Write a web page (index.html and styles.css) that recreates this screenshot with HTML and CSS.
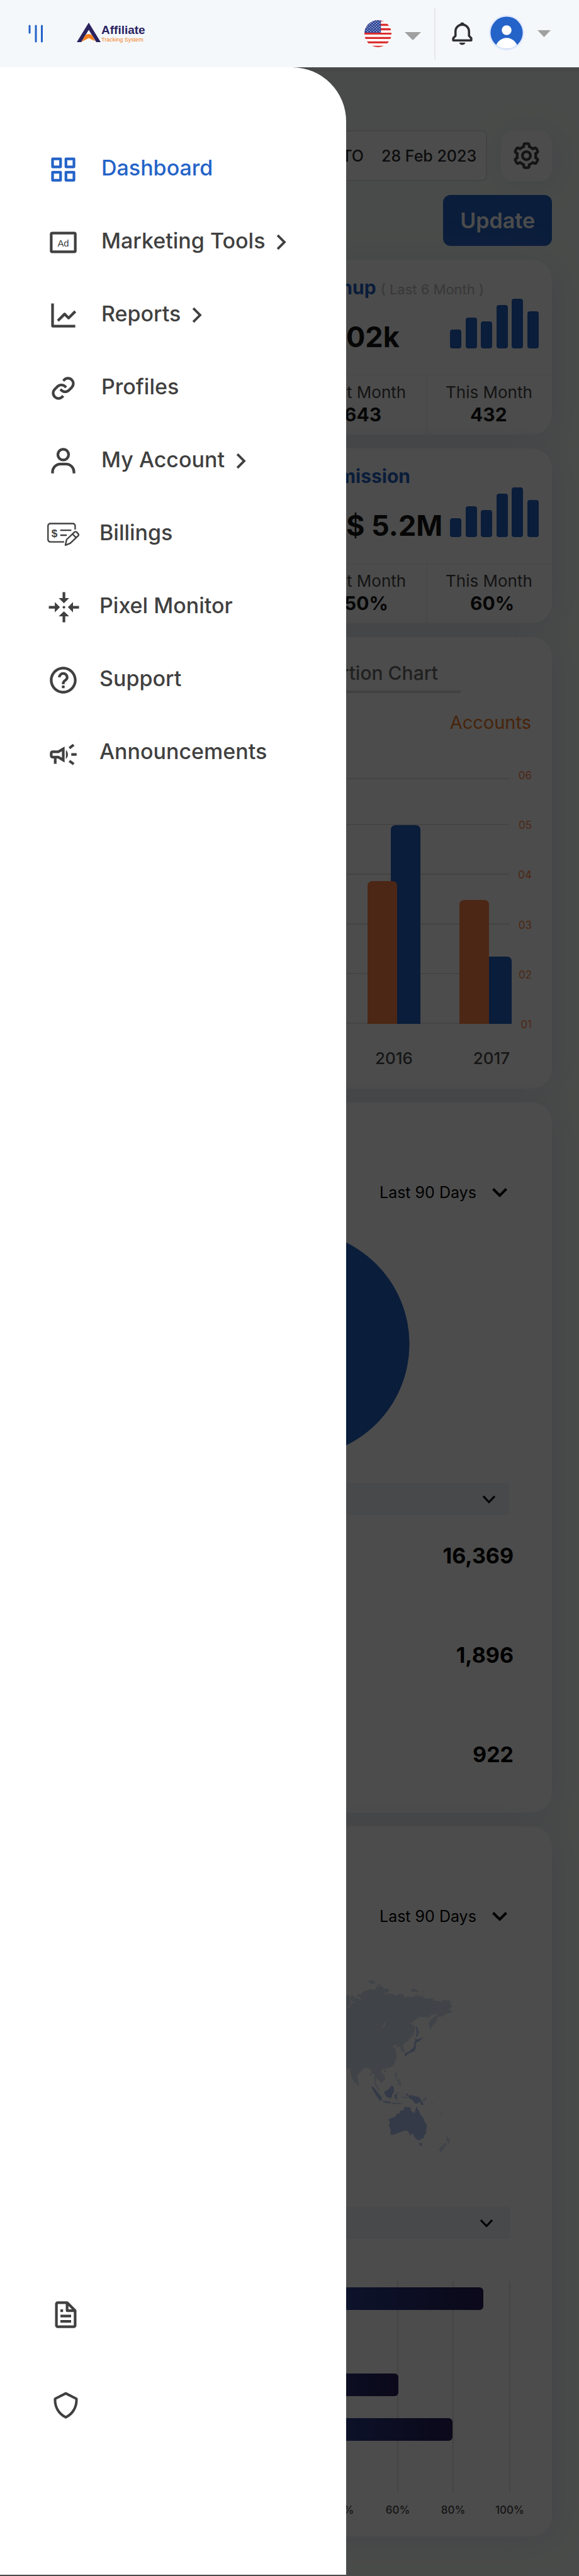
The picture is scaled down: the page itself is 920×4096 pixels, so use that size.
FILE: index.html
```html
<!DOCTYPE html>
<html lang="en">
<head>
<meta charset="utf-8">
<meta name="viewport" content="width=device-width, initial-scale=1">
<title>Affiliate Tracking System</title>
<link rel="stylesheet" href="styles.css">
</head>
<body>
<div class="page">
  <header class="topbar">
    <button class="icon-button menu-button" type="button" aria-label="Close menu">
      <svg width="24" height="29" viewBox="0 0 24 29" fill="none" stroke="#2463c8" stroke-width="3" stroke-linecap="round"><path d="M2 2v11M12 2v25M21.500 2v25"/></svg>
    </button>
    <a class="logo" href="#" aria-label="Affiliate Tracking System">
      <svg width="116" height="38" viewBox="0 0 116 38">
        <path fill="#2a235f" d="M19 1 38 32H31L19 12.500 7 32H0z"/>
        <path fill="#f57f20" d="M7.500 31.500 13.500 21q5.500-4 11 0l4.500 9.500-10-5z"/>
        <text class="logo-name" x="39" y="19">Affiliate</text>
        <text class="logo-tag" x="39" y="31">Tracking System</text>
      </svg>
    </a>
    <div class="topbar-tools">
      <button class="icon-button" type="button" aria-label="Language: English (US)">
        <svg width="43" height="43" viewBox="0 0 24 24">
          <defs><clipPath id="disc"><circle cx="12" cy="12" r="12"/></clipPath></defs>
          <g clip-path="url(#disc)">
            <path fill="#fff" d="M0 0h24v24H0z"/>
            <path fill="#dc2f2f" d="M0 0h24v1.200H0zM0 3.200h24v1.900H0zM0 7.100h24V9H0zM0 11.100h24v1.800H0zM0 14.900h24v1.900H0zM0 18.900h24v1.800H0zM0 22.800h24V24H0z"/>
            <path fill="#2f4698" d="M0 0h14.600v11.100H0z"/>
            <g stroke="#fff" stroke-width=".8" stroke-linecap="round" stroke-dasharray="0 2.600"><path d="M3 .600h12M1.700 1.800h12M3 3h12M1.700 4.200h12M3 5.400h12M1.700 6.600h12M3 7.800h12M1.700 9h12M3 10.200h12"/></g>
          </g>
        </svg>
        <svg width="26" height="21" viewBox="0 0 26 21"><path fill="#a0a0a0" d="M0 8h26L13 21z"/></svg>
      </button>
      <span class="topbar-divider"></span>
      <button class="icon-button" type="button" aria-label="Notifications">
        <svg width="43" height="43" viewBox="0 0 24 24" fill="#2f3033"><path d="M19 13.586V10c0-3.217-2.185-5.927-5.145-6.742C13.562 2.520 12.846 2 12 2s-1.562.520-1.855 1.258C7.185 4.074 5 6.783 5 10v3.586l-1.707 1.707A.996.996 0 0 0 3 16v2a1 1 0 0 0 1 1h16a1 1 0 0 0 1-1v-2a.996.996 0 0 0-.293-.707L19 13.586zM19 17H5v-.586l1.707-1.707A.996.996 0 0 0 7 14v-4c0-2.757 2.243-5 5-5s5 2.243 5 5v4c0 .266.105.520.293.707L19 16.414V17zm-7 5a2.980 2.980 0 0 0 2.818-2H9.182A2.980 2.980 0 0 0 12 22z"/></svg>
      </button>
      <button class="icon-button" type="button" aria-label="Profile">
        <svg width="56" height="60" viewBox="0 0 56 60">
          <defs><clipPath id="face"><circle cx="28" cy="28" r="25.600"/></clipPath></defs>
          <circle cx="28" cy="28" r="28" fill="#e1e9ff"/>
          <circle cx="28" cy="28" r="25.600" fill="#2463c8"/>
          <circle cx="28" cy="24" r="7.800" fill="#fff"/>
          <ellipse cx="28" cy="55" rx="18" ry="18.700" fill="#fff" clip-path="url(#face)"/>
        </svg>
        <svg width="21" height="11" viewBox="0 0 21 11"><path fill="#a0a0a0" d="M0 0h21L10.500 11z"/></svg>
      </button>
    </div>
  </header>

  <div class="stage">
    <main class="dashboard">
      <div class="toolbar">
        <div class="date-range">
          <input class="date-input" type="text" value="01 Jan 2023" aria-label="From date">
          <span>TO</span>
          <input class="date-input" type="text" value="28 Feb 2023" aria-label="To date">
        </div>
        <button class="settings-button" type="button" aria-label="Settings">
          <svg width="51" height="51" viewBox="0 0 24 24" fill="#444"><path d="M12 16c2.206 0 4-1.794 4-4s-1.794-4-4-4-4 1.794-4 4 1.794 4 4 4zm0-6c1.084 0 2 .916 2 2s-.916 2-2 2-2-.916-2-2 .916-2 2-2z"/><path d="m2.845 16.136 1 1.730c.531.917 1.809 1.261 2.730.730l.529-.306A8.100 8.100 0 0 0 9 19.402V20c0 1.103.897 2 2 2h2c1.103 0 2-.897 2-2v-.598a8.132 8.132 0 0 0 1.896-1.111l.529.306c.923.530 2.198.188 2.731-.731l.999-1.729a2.001 2.001 0 0 0-.731-2.732l-.505-.292a7.718 7.718 0 0 0 0-2.224l.505-.292a2.002 2.002 0 0 0 .731-2.732l-.999-1.729c-.531-.920-1.808-1.265-2.731-.732l-.529.306A8.100 8.100 0 0 0 15 4.598V4c0-1.103-.897-2-2-2h-2c-1.103 0-2 .897-2 2v.598a8.132 8.132 0 0 0-1.896 1.111l-.529-.306c-.924-.531-2.200-.187-2.731.732l-.999 1.729a2.001 2.001 0 0 0 .731 2.732l.505.292a7.683 7.683 0 0 0 0 2.223l-.505.292a2.003 2.003 0 0 0-.731 2.733zm3.326-2.758A5.703 5.703 0 0 1 6 12c0-.462.058-.926.170-1.378a.999.999 0 0 0-.470-1.108l-1.123-.650.998-1.729 1.145.662a.997.997 0 0 0 1.188-.142 6.071 6.071 0 0 1 2.384-1.399A1 1 0 0 0 11 5.300V4h2v1.300a1 1 0 0 0 .708.956 6.083 6.083 0 0 1 2.384 1.399.999.999 0 0 0 1.188.142l1.144-.661 1 1.729-1.124.649a1 1 0 0 0-.470 1.108c.112.452.170.916.170 1.378 0 .461-.058.925-.171 1.378a1 1 0 0 0 .471 1.108l1.123.649-.998 1.729-1.145-.661a.996.996 0 0 0-1.188.142 6.071 6.071 0 0 1-2.384 1.399A1 1 0 0 0 13 18.700l.002 1.300H11v-1.300a1 1 0 0 0-.708-.956 6.083 6.083 0 0 1-2.384-1.399.992.992 0 0 0-1.188-.141l-1.144.662-1-1.729 1.124-.651a1 1 0 0 0 .471-1.108z"/></svg>
        </button>
      </div>
      <button class="update-button" type="button">Update</button>

      <section class="card stat">
        <h2 class="stat-title stat-title-note">Affiliate Signup <small>( Last 6 Month )</small></h2>
        <div class="stat-body">
          <strong class="stat-value">02k</strong>
          <div class="mini-bars"><i style="height:38%"></i><i style="height:62%"></i><i style="height:54%"></i><i style="height:87%"></i><i style="height:100%"></i><i style="height:75%"></i></div>
        </div>
        <dl class="stat-foot">
          <div><dt>Last Month</dt><dd>643</dd></div>
          <div><dt>This Month</dt><dd>432</dd></div>
        </dl>
      </section>

      <section class="card stat">
        <h2 class="stat-title">Total Commission</h2>
        <div class="stat-body">
          <strong class="stat-value">$ 5.2M</strong>
          <div class="mini-bars"><i style="height:38%"></i><i style="height:62%"></i><i style="height:54%"></i><i style="height:87%"></i><i style="height:100%"></i><i style="height:75%"></i></div>
        </div>
        <dl class="stat-foot">
          <div><dt>Last Month</dt><dd>50%</dd></div>
          <div><dt>This Month</dt><dd>60%</dd></div>
        </dl>
      </section>

      <section class="card chart-card">
        <h2 class="chart-tab">Proportion Chart</h2>
        <p class="chart-legend">Accounts</p>
        <svg class="chart" viewBox="0 0 834 500">
          <path stroke="#e3e3e3" stroke-width="2" d="M60 28h706M60 101h706M60 180h706M60 259h706M60 338h706M60 417h706"/>
          <path fill="#2261c4" d="M578 418V110q0-8 8-8h31q8 0 8 8v308zM723 418V319q0-8 8-8h31q8 0 8 8v99z"/>
          <path fill="#ff8249" d="M541 418V199q0-8 8-8h31q8 0 8 8v219zM687 418V229q0-8 8-8h31q8 0 8 8v189z"/>
          <g class="axis-value" text-anchor="end">
            <text x="802" y="29">06</text><text x="802" y="108">05</text><text x="802" y="187">04</text><text x="802" y="267">03</text><text x="802" y="346">02</text><text x="802" y="425">01</text>
          </g>
          <g class="axis-year" text-anchor="middle"><text x="583" y="482">2016</text><text x="738" y="482">2017</text></g>
        </svg>
      </section>

      <section class="card">
        <div class="picker">
          <select aria-label="Period"><option>Last 90 Days</option></select>
          <svg width="24" height="15" viewBox="0 0 24 15" fill="none" stroke="#000" stroke-width="4"><path d="m1.500 1.500 10.500 10.500L22.500 1.500"/></svg>
        </div>
        <svg class="pie" viewBox="0 0 834 360" role="img" aria-label="Share of clicks"><circle cx="428" cy="180" r="179.600" fill="#2261c4"/></svg>
        <div class="bar-select">
          <select aria-label="Breakdown"><option>Source</option></select>
          <svg width="20" height="13" viewBox="0 0 20 13" fill="none" stroke="#000" stroke-width="3"><path d="m1 1 9 9.500L19 1"/></svg>
        </div>
        <table class="totals">
          <tr><th scope="row">Clicks</th><td>16,369</td></tr>
          <tr><th scope="row">Visits</th><td>1,896</td></tr>
          <tr><th scope="row">Signups</th><td>922</td></tr>
        </table>
      </section>

      <section class="card">
        <div class="picker">
          <select aria-label="Period"><option>Last 90 Days</option></select>
          <svg width="24" height="15" viewBox="0 0 24 15" fill="none" stroke="#000" stroke-width="4"><path d="m1.500 1.500 10.500 10.500L22.500 1.500"/></svg>
        </div>
        <svg class="map" viewBox="0 0 834 290" role="img" aria-label="World map">
          <g transform="translate(470.500 -251.600) scale(.2593 .4094)">
            <g fill="#d6dfee">
              <path d="M110 690 162 696 166 732 145 740 160 742 176 722 190 724 205 732 185 718 170 716 170 697 186 695 190 708 198 702 213 706 228 712 230 706 205 692 245 688 235 683 290 670 310 674 320 668 328 660 360 658 368 667 395 668 405 676 390 685 355 693 400 687 430 689 445 695 465 689 490 690 497 697 500 706 515 700 550 702 560 695 605 697 630 708 672 706 680 716 715 717 725 722 735 712 780 716 778 725 790 738 770 748 792 759 745 767 738 776 700 778 697 792 685 803 668 815 655 827 646 803 665 785 695 772 697 765 675 772 668 767 650 780 620 785 640 779 590 778 565 790 533 805 560 812 565 822 553 848 530 862 522 873 505 875 488 888 500 910 497 915 484 914 476 905 470 893 445 898 452 884 425 893 435 900 452 902 443 910 452 932 443 945 433 966 400 978 362 980 355 992 380 1008 380 1020 355 1036 345 1025 322 1016 322 1035 348 1068 335 1062 314 1035 313 1000 302 997 290 980 262 975 245 980 230 992 210 1005 210 1020 220 1040 212 1048 205 1036 192 1035 172 1010 165 978 150 980 110 970z"/>
              <path d="M272 643 290 635 310 637 305 641 325 646 300 652 290 646zM328 656 340 649 356 654zM538 670 552 669 588 677 575 682 541 679zM600 677 624 679 612 681zM564 688 583 689 572 692zM284 1006 290 996 304 994 296 1005zM370 986 384 982 382 993 373 992zM438 1002 450 990 455 1000 448 1010 456 1022 472 1020 468 1030 478 1036 474 1052 466 1040 452 1046 462 1034 446 1016zM440 1076 470 1068 468 1073 446 1078zM484 1070 489 1070 487 1082zM650 1107 668 1111 685 1122 676 1119 665 1113zM716 1142 733 1163 722 1156zM697 1167 708 1173 702 1173zM749 1232 764 1244 768 1253 783 1253 766 1274 762 1262 752 1256 759 1248zM708 1293 742 1270 757 1270 752 1281 740 1284 736 1294 722 1304z"/>
            </g>
            <g fill="#adc4ed">
              <path d="M570 820 577 814 580 830 588 838 578 844 582 854 570 855 573 840zM563 862 578 866 617 856 590 872 570 878 567 885 569 895 560 911 520 922 503 932 498 926 506 918 535 910 540 900 544 905 556 895 558 876 565 872zM294 1050 308 1050 335 1072 360 1090 357 1103 345 1102 325 1085zM360 1103 412 1108 415 1115 375 1111zM420 1112 482 1112 458 1122 468 1115 422 1116zM435 1118 447 1122 440 1122zM373 1070 400 1060 420 1044 432 1050 434 1070 424 1078 420 1092 408 1094 385 1088zM436 1084 440 1079 464 1080 446 1086 460 1089 450 1090 458 1102 450 1100 444 1092 440 1102zM500 1077 520 1078 524 1084 540 1082 590 1090 610 1112 622 1119 600 1120 592 1108 575 1116 560 1113 550 1102 530 1096 522 1088zM473 1089 512 1089 522 1093 476 1090zM606 1100 625 1097 624 1087 635 1095 618 1103z"/>
              <path d="M400 1175 440 1166 458 1151 465 1156 474 1141 488 1143 502 1126 540 1132 535 1140 546 1147 560 1152 571 1125 590 1147 600 1161 617 1174 620 1184 635 1198 630 1230 618 1240 617 1250 602 1250 596 1257 575 1256 562 1247 548 1230 540 1238 530 1234 520 1223 502 1219 462 1229 430 1236 412 1236 413 1218 402 1195 409 1190zM584 1266 607 1270 600 1282z"/>
            </g>
            <path fill="#fff" d="M351 829 370 810 373 800 382 800 378 813z"/>
          </g>
        </svg>
        <div class="bar-select bar-select-map">
          <select aria-label="Region"><option>Region</option></select>
          <svg width="20" height="13" viewBox="0 0 20 13" fill="none" stroke="#000" stroke-width="3"><path d="m1 1 9 9.500L19 1"/></svg>
        </div>
        <svg class="regions" viewBox="0 0 834 390">
          <defs><linearGradient id="bar"><stop stop-color="#3a78f0"/><stop offset="1" stop-color="#251e57"/></linearGradient></defs>
          <path stroke="#e3e3e3" stroke-width="2" d="M500 8v336M589 8v336M677 8v336M767 8v336"/>
          <g fill="url(#bar)">
            <rect x="150" y="17" width="575" height="36" rx="6"/>
            <rect x="150" y="154" width="440" height="36" rx="6"/>
            <rect x="150" y="225" width="526" height="36" rx="6"/>
          </g>
          <g class="axis-percent" text-anchor="middle"><text x="500" y="377">40%</text><text x="589" y="377">60%</text><text x="677" y="377">80%</text><text x="767" y="377">100%</text></g>
        </svg>
      </section>
    </main>

    <div class="scrim"></div>

    <aside class="drawer">
      <nav class="drawer-nav" aria-label="Main">
        <a class="nav-item is-active" href="#"><svg class="nav-icon" viewBox="0 0 24 24"><path d="M10 3H4a1 1 0 0 0-1 1v6a1 1 0 0 0 1 1h6a1 1 0 0 0 1-1V4a1 1 0 0 0-1-1zM9 9H5V5h4v4zm11-6h-6a1 1 0 0 0-1 1v6a1 1 0 0 0 1 1h6a1 1 0 0 0 1-1V4a1 1 0 0 0-1-1zm-1 6h-4V5h4v4zm-9 4H4a1 1 0 0 0-1 1v6a1 1 0 0 0 1 1h6a1 1 0 0 0 1-1v-6a1 1 0 0 0-1-1zm-1 6H5v-4h4v4zm11-6h-6a1 1 0 0 0-1 1v6a1 1 0 0 0 1 1h6a1 1 0 0 0 1-1v-6a1 1 0 0 0-1-1zm-1 6h-4v-4h4v4z"/></svg><span>Dashboard</span></a>
        <a class="nav-item" href="#"><svg class="nav-icon" viewBox="0 0 24 24"><rect x="3" y="5" width="18" height="14" rx=".8" fill="none" stroke="currentColor" stroke-width="2"/><text class="ad-mark" x="12" y="15" text-anchor="middle">Ad</text></svg><span>Marketing Tools</span><svg class="nav-more" viewBox="0 0 24 24"><path d="m13.172 12-4.950-4.950 1.414-1.414L16 12l-6.364 6.364-1.414-1.414z"/></svg></a>
        <a class="nav-item" href="#"><svg class="nav-icon" viewBox="0 0 24 24"><path d="M3 3v17a1 1 0 0 0 1 1h17v-2H5V3H3z"/><path d="M15.293 14.707a.999.999 0 0 0 1.414 0l5-5-1.414-1.414L16 12.586l-2.293-2.293a.999.999 0 0 0-1.414 0l-5 5 1.414 1.414L13 12.414l2.293 2.293z"/></svg><span>Reports</span><svg class="nav-more" viewBox="0 0 24 24"><path d="m13.172 12-4.950-4.950 1.414-1.414L16 12l-6.364 6.364-1.414-1.414z"/></svg></a>
        <a class="nav-item" href="#"><svg class="nav-icon" viewBox="0 0 24 24"><path d="M8.465 11.293c1.133-1.133 3.109-1.133 4.242 0l.707.707 1.414-1.414-.707-.707c-.943-.944-2.199-1.465-3.535-1.465s-2.592.521-3.535 1.465L4.929 12a5.008 5.008 0 0 0 0 7.071 4.983 4.983 0 0 0 3.535 1.462A4.982 4.982 0 0 0 12 19.071l.707-.707-1.414-1.414-.707.707a3.007 3.007 0 0 1-4.243 0 3.005 3.005 0 0 1 0-4.243l2.122-2.121z"/><path d="m12 4.929-.707.707 1.414 1.414.707-.707a3.007 3.007 0 0 1 4.243 0 3.005 3.005 0 0 1 0 4.243l-2.122 2.121c-1.133 1.133-3.109 1.133-4.242 0L10.586 12l-1.414 1.414.707.707c.943.944 2.199 1.465 3.535 1.465s2.592-.521 3.535-1.465L19.071 12a5.008 5.008 0 0 0 0-7.071 5.006 5.006 0 0 0-7.071 0z"/></svg><span>Profiles</span></a>
        <a class="nav-item" href="#"><svg class="nav-icon" viewBox="0 0 24 24"><path d="M12 2a5 5 0 1 0 5 5 5 5 0 0 0-5-5zm0 8a3 3 0 1 1 3-3 3 3 0 0 1-3 3zm9 11v-1a7 7 0 0 0-7-7h-4a7 7 0 0 0-7 7v1h2v-1a5 5 0 0 1 5-5h4a5 5 0 0 1 5 5v1z"/></svg><span>My Account</span><svg class="nav-more" viewBox="0 0 24 24"><path d="m13.172 12-4.950-4.950 1.414-1.414L16 12l-6.364 6.364-1.414-1.414z"/></svg></a>
        <a class="nav-item nav-item-tight" href="#"><svg class="nav-icon" viewBox="0 0 24 24"><g fill="none" stroke="currentColor" stroke-width="1.100" stroke-linejoin="round"><path d="M12.700 17.700H2.300a1.700 1.700 0 0 1-1.700-1.700V5.700A1.700 1.700 0 0 1 2.300 4h16.900a1.700 1.700 0 0 1 1.700 1.700v2.800"/><path stroke-linecap="round" d="M10.200 9h7.400M10.200 12.700h4"/><path d="M13.600 20.200l.9-4.200 6-5.700q.7-.5 1.400 0l1.300 1.400q.6.700 0 1.400l-6 5.700zM19 11.900l2.600 2.600"/></g><text class="cheque-mark" x="5.400" y="14" text-anchor="middle">$</text></svg><span>Billings</span></a>
        <a class="nav-item nav-item-tight" href="#"><svg class="nav-icon" viewBox="0 0 24 24"><path id="arrow" d="M11.500.700h2v4.500h2.900L12.500 9 8.600 5.200h2.900z"/><use href="#arrow" transform="rotate(90 12.500 12)"/><use href="#arrow" transform="rotate(180 12.500 12)"/><use href="#arrow" transform="rotate(270 12.500 12)"/><circle cx="12.500" cy="12" r="1"/></svg><span>Pixel Monitor</span></a>
        <a class="nav-item nav-item-tight" href="#"><svg class="nav-icon" viewBox="0 0 24 24"><path d="M12 6a3.939 3.939 0 0 0-3.934 3.934h2C10.066 8.867 10.934 8 12 8s1.934.867 1.934 1.934c0 .598-.481 1.032-1.216 1.626a9.208 9.208 0 0 0-.691.599c-.998.997-1.027 2.056-1.027 2.174V15h2l-.001-.633c.001-.016.033-.386.441-.793.150-.150.339-.300.535-.458.779-.631 1.958-1.584 1.958-3.182A3.937 3.937 0 0 0 12 6zm-1 10h2v2h-2z"/><path d="M12 2C6.486 2 2 6.486 2 12s4.486 10 10 10 10-4.486 10-10S17.514 2 12 2zm0 18c-4.411 0-8-3.589-8-8s3.589-8 8-8 8 3.589 8 8-3.589 8-8 8z"/></svg><span>Support</span></a>
        <a class="nav-item nav-item-tight" href="#"><svg class="nav-icon" viewBox="0 0 24 24"><path d="M18 12v2h4v-2h-4zm-2 6.610c.960.710 2.210 1.650 3.200 2.390.4-.530.8-1.070 1.200-1.600-.990-.740-2.240-1.680-3.200-2.400-.4.540-.8 1.080-1.200 1.610zM20.400 6.600c-.4-.530-.8-1.070-1.200-1.600-.990.740-2.240 1.680-3.200 2.400.4.530.8 1.070 1.200 1.600.960-.720 2.210-1.650 3.200-2.400zM4 10c-1.100 0-2 .9-2 2v2c0 1.100.9 2 2 2h1v4h2v-4h1l5 3V7l-5 3H4zm5.030 1.710L11 10.530v4.940l-1.970-1.180-.480-.290H4v-2h4.550l.480-.290zM15.500 13c0-1.330-.580-2.530-1.500-3.350v6.690c.920-.810 1.500-2.010 1.500-3.340z"/></svg><span>Announcements</span></a>
      </nav>
      <div class="drawer-foot">
        <a href="#" aria-label="Terms"><svg class="nav-icon" viewBox="0 0 24 24"><path d="M19.903 8.586a.997.997 0 0 0-.196-.293l-6-6a.997.997 0 0 0-.293-.196c-.030-.014-.062-.022-.094-.033a.991.991 0 0 0-.259-.051C13.040 2.011 13.021 2 13 2H6c-1.103 0-2 .897-2 2v16c0 1.103.897 2 2 2h12c1.103 0 2-.897 2-2V9c0-.021-.011-.040-.013-.062a.952.952 0 0 0-.051-.259c-.010-.032-.019-.063-.033-.093zM16.586 8H14V5.414L16.586 8zM6 20V4h6v5a1 1 0 0 0 1 1h5l.002 10H6z"/><path d="M8 12h8v2H8zm0 4h8v2H8zm0-8h2v2H8z"/></svg></a>
        <a href="#" aria-label="Privacy"><svg class="nav-icon" viewBox="0 0 24 24"><path fill="none" stroke="currentColor" stroke-width="1.900" stroke-linejoin="round" d="M12 3.100 20 7.200C20.300 13.500 17 18.700 12 21 7 18.700 3.700 13.500 4 7.200z"/></svg></a>
      </div>
    </aside>
  </div>
</div>
</body>
</html>
```
FILE: styles.css
```css
* { box-sizing: border-box; }
body { margin: 0; font-family: Inter, "Liberation Sans", sans-serif; color: #404040; background: #f6fcf7; }
h2, p, dl, dd { margin: 0; }
svg { display: block; flex: none; }
button, input, select { font: inherit; color: inherit; border: 0; background: none; padding: 0; margin: 0; }
select { appearance: none; }

.page { display: flex; flex-direction: column; min-height: 100vh; }

/* Top bar */
.topbar { display: flex; align-items: center; height: 107px; padding: 0 45px; background: #f4f8fb; }
.icon-button { display: flex; align-items: center; gap: 21px; }
.logo { margin-left: 53px; }
.logo-name { font: bold 19px "Liberation Sans Narrow", "Liberation Sans", sans-serif; fill: #2a235f; }
.logo-tag { font: 9px "Liberation Sans Narrow", "Liberation Sans", sans-serif; fill: #f57f20; }
.topbar-tools { display: flex; align-items: center; gap: 21px; margin-left: auto; }
.topbar-divider { width: 2px; height: 83px; background: #e6e6e6; }

/* Dashboard */
.stage { position: relative; display: flow-root; flex: 1; }
.dashboard { display: flex; flex-direction: column; gap: 22px; padding: 94px 43px 63px; overflow: hidden; margin-top: 4px; border-top: 2px solid #e6e6e6; }
.toolbar { display: flex; gap: 22px; }
.date-range { display: flex; flex: 1; justify-content: flex-end; align-items: center; gap: 28px; height: 81px; padding-right: 12px; border: 2px solid #e3e3e3; border-radius: 8px; background: #fff; font-size: 25px; font-weight: 500; color: #2c2e30; }
.date-input { width: 154px; }
.settings-button { display: grid; place-items: center; width: 81px; height: 81px; border-radius: 20px; background: #fff; box-shadow: 6px 6px 60px rgba(190, 196, 225, .4); }
.update-button { align-self: flex-end; height: 81px; padding: 0 27px; border-radius: 12px; background: #2261c4; color: #fff; font-size: 34px; font-weight: 600; }
.card { border-radius: 32px; background: #fff; box-shadow: 6px 6px 60px rgba(190, 196, 225, .4); }

.stat-title { padding: 27px 225px 0 0; font-size: 30px; line-height: 35px; font-weight: 700; color: #2261c4; text-align: right; }
.stat-title-note { padding-right: 108px; }
.stat-title small { font-size: 22px; line-height: 22px; font-weight: 400; color: #bbb; }
.stat-body { display: flex; justify-content: flex-end; align-items: flex-end; height: 79px; padding-right: 21px; }
.stat-value { width: 165px; font-size: 45px; line-height: 36px; font-weight: 700; color: #171717; white-space: nowrap; }
.mini-bars { display: flex; justify-content: space-between; align-items: flex-end; width: 141px; height: 79px; }
.mini-bars i { width: 18px; border-radius: 4px; background: #2261c4; }
.stat-foot { display: flex; justify-content: flex-end; margin-top: 41px; border-top: 2px solid #f6f6f6; }
.stat-foot div { width: 200px; padding: 10px 0 14px 29px; border-left: 2px solid #f3f3f3; }
.stat-foot dt { font-size: 26px; line-height: 34px; color: #444; }
.stat-foot dd { padding-left: 39px; font-size: 30px; line-height: 36px; font-weight: 700; color: #171717; }

.chart-card { display: flex; flex-direction: column; padding: 37px 0 21px; }
.chart-tab { align-self: flex-end; margin-right: 145px; padding: 0 36px 8px; border-bottom: 4px solid #dcdcdc; font-size: 30px; line-height: 40px; font-weight: 500; color: #6b6b6b; }
.chart-legend { margin: 27px 33px 41px; font-size: 29px; line-height: 40px; text-align: right; color: #ed7825; }
.chart, .pie, .map, .regions { width: 100%; }
.axis-value { font-size: 17px; fill: #ff8249; }
.axis-year { font-size: 26px; font-weight: 500; fill: #4c4c4c; }
.axis-percent { font-size: 17px; font-weight: 500; fill: #474747; }

.picker { display: flex; justify-content: flex-end; align-items: center; gap: 25px; padding: 123px 71px 0; font-size: 25px; line-height: 40px; color: #000; }
.pie { margin: 41px 0; }
.bar-select { position: relative; margin: 0 68px 0 54px; color: #000; font-size: 25px; }
.bar-select select { display: block; width: 100%; height: 51px; padding: 0 22px; border-radius: 4px; background: #f0f5fa; }
.bar-select svg { position: absolute; right: 22px; top: 20px; pointer-events: none; }
.bar-select-map { margin-right: 66px; }
.bar-select-map svg { right: 28px; }
.totals { width: 100%; margin-top: 45px; padding: 0 61px 72px 54px; border-spacing: 0; color: #000; }
.totals th, .totals td { padding: 0 0 118px; font-size: 34px; line-height: 40px; }
.totals th { font-weight: 400; text-align: left; }
.totals td { font-weight: 700; text-align: right; }
.totals tr:last-child > * { padding-bottom: 0; }
.map { margin: 73px 0 79px; }
.regions { margin-top: 60px; padding-bottom: 23px; }

/* Drawer */
.scrim { position: absolute; inset: 0; background: rgba(0, 0, 0, .7); }
.drawer { position: absolute; top: 0; bottom: 2px; left: 0; display: flex; flex-direction: column; justify-content: space-between; width: 550px; padding: 104px 0 198px; border-top-right-radius: 86px; background: #fff; }
.drawer a { display: flex; align-items: center; color: #404040; text-decoration: none; }
.drawer-nav { padding-left: 75px; }
.drawer .nav-item { height: 116px; font-size: 34px; line-height: 40px; font-weight: 500; }
.drawer .is-active { color: #2463c8; }
.nav-item span { padding: 0 3px 4px 35px; }
.nav-item-tight span { padding-left: 32px; }
.nav-icon { width: 51px; height: 51px; fill: currentColor; }
.nav-more { width: 46px; height: 46px; fill: currentColor; }
.ad-mark { font: 7px "Liberation Sans Narrow", "Liberation Sans", sans-serif; }
.cheque-mark { font: bold 8px "Liberation Sans", sans-serif; }
.drawer-foot { padding-left: 79px; }
.drawer-foot a { height: 144px; }
```
